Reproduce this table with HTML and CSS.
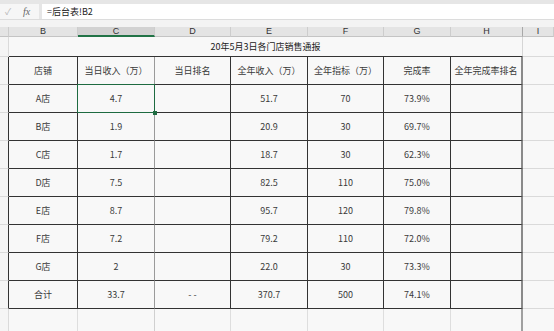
FILE: index.html
```html
<!DOCTYPE html>
<html lang="zh">
<head>
<meta charset="utf-8">
<link rel="stylesheet" href="styles.css">
</head>
<body>
<div class="fbar">
  <div class="fbar-left"><span class="check">✓</span><span class="fx">fx</span></div>
  <div class="fbar-input">=后台表!B2</div>
</div>
<div class="band"></div>
<div class="sheet">
  <div class="ch"></div>
  <div class="ch">B</div>
  <div class="ch ch-sel">C</div>
  <div class="ch">D</div>
  <div class="ch">E</div>
  <div class="ch">F</div>
  <div class="ch">G</div>
  <div class="ch ch-h">H</div>
  <div class="ch">I</div>

  <div class="rh"></div>
  <div class="title">20年5月3日各门店销售通报</div>
  <div class="gc"></div>

  <div class="rh tb"></div>
  <div class="c">店铺</div><div class="c">当日收入（万）</div><div class="c cd">当日排名</div><div class="c">全年收入（万）</div><div class="c">全年指标（万）</div><div class="c">完成率</div><div class="c last">全年完成率排名</div>
  <div class="gc"></div>

  <div class="rh tb"></div>
  <div class="c">A店</div><div class="c sel">4.7</div><div class="c cd"></div><div class="c">51.7</div><div class="c">70</div><div class="c">73.9%</div><div class="c last"></div>
  <div class="gc"></div>

  <div class="rh tb"></div>
  <div class="c">B店</div><div class="c">1.9</div><div class="c cd"></div><div class="c">20.9</div><div class="c">30</div><div class="c">69.7%</div><div class="c last"></div>
  <div class="gc"></div>

  <div class="rh tb"></div>
  <div class="c">C店</div><div class="c">1.7</div><div class="c cd"></div><div class="c">18.7</div><div class="c">30</div><div class="c">62.3%</div><div class="c last"></div>
  <div class="gc"></div>

  <div class="rh tb"></div>
  <div class="c">D店</div><div class="c">7.5</div><div class="c cd"></div><div class="c">82.5</div><div class="c">110</div><div class="c">75.0%</div><div class="c last"></div>
  <div class="gc"></div>

  <div class="rh tb"></div>
  <div class="c">E店</div><div class="c">8.7</div><div class="c cd"></div><div class="c">95.7</div><div class="c">120</div><div class="c">79.8%</div><div class="c last"></div>
  <div class="gc"></div>

  <div class="rh tb"></div>
  <div class="c">F店</div><div class="c">7.2</div><div class="c cd"></div><div class="c">79.2</div><div class="c">110</div><div class="c">72.0%</div><div class="c last"></div>
  <div class="gc"></div>

  <div class="rh tb"></div>
  <div class="c">G店</div><div class="c">2</div><div class="c cd"></div><div class="c">22.0</div><div class="c">30</div><div class="c">73.3%</div><div class="c last"></div>
  <div class="gc"></div>

  <div class="rh tb"></div>
  <div class="c">合计</div><div class="c">33.7</div><div class="c cd">- -</div><div class="c">370.7</div><div class="c">500</div><div class="c">74.1%</div><div class="c last"></div>
  <div class="gc"></div>

  <div class="rh"></div>
  <div class="e"></div><div class="e"></div><div class="e ed"></div><div class="e"></div><div class="e"></div><div class="e"></div><div class="e elast"></div>
  <div class="gc"></div>
</div>
</body>
</html>
```
FILE: styles.css
```css
html, body {
  margin: 0;
  padding: 0;
}
body {
  width: 554px;
  height: 331px;
  overflow: hidden;
  background: #f8f8f8;
  font-family: "Noto Sans CJK SC", "Liberation Sans", sans-serif;
  font-size: 9px;
  color: #3a3a3a;
}
.fbar {
  display: flex;
  height: 19px;
  padding-top: 4px;
  box-sizing: border-box;
  background: #e6e6e6;
}
.fbar-left {
  width: 39px;
  height: 15px;
  background: #f6f6f6;
  display: flex;
  align-items: center;
  margin-right: 3px;
}
.check {
  color: #b8b8b8;
  font-size: 9px;
  margin-left: 5px;
  width: 18px;
}
.fx {
  font-family: "Liberation Serif", serif;
  font-style: italic;
  font-size: 10px;
  color: #666;
}
.fbar-input {
  flex: 1;
  height: 15px;
  background: #ffffff;
  line-height: 15px;
  padding-left: 5px;
  font-size: 9px;
  color: #222;
}
.band {
  height: 8px;
  background: #f3f3f3;
  border-top: 1px solid #dcdcdc;
  box-sizing: border-box;
}
.sheet {
  display: grid;
  grid-template-columns: 9px 69px 77px 76px 77px 76px 67px 72px 31px;
  grid-template-rows: 10px 20px repeat(9, 28px) 24px;
}
.ch {
  background: #e4e4e4;
  border-right: 1px solid #cdcdcd;
  border-bottom: 1px solid #c4c4c4;
  box-sizing: border-box;
  text-align: center;
  line-height: 9px;
  font-family: "Liberation Sans", sans-serif;
  font-size: 9px;
  color: #333;
}
.ch-sel {
  background: #d2d2d2;
  border-bottom: 2px solid #217346;
}
.ch-h {
  border-right: 1px solid #a8a8a8;
}
.rh {
  background: #f5f5f5;
  border-right: 1px solid #dadada;
  border-bottom: 1px solid #dadada;
  box-sizing: border-box;
}
.rh.tb {
  border-right: 1px solid #333;
}
.title {
  grid-column: 2 / 9;
  border-bottom: 1px solid #333;
  border-right: 1px solid #d6d6d6;
  box-sizing: border-box;
  display: flex;
  align-items: center;
  justify-content: center;
  font-size: 9px;
  color: #222;
}
.gc {
  border-bottom: 1px solid #dadada;
  box-sizing: border-box;
}
.c {
  border-right: 1px solid #333;
  border-bottom: 1px solid #333;
  box-sizing: border-box;
  display: flex;
  align-items: center;
  justify-content: center;
  position: relative;
}
.c.cd {
  border-left: 1px solid #9a9a9a;
  margin-left: -1px;
}
.c.last {
  border-right: 2px solid #8a8a8a;
}
.c.sel {
  z-index: 2;
}
.c.sel::after {
  content: "";
  position: absolute;
  left: -1px;
  top: -1px;
  right: -1px;
  bottom: -1px;
  border: 1.5px solid #1e6b41;
}
.c.sel::before {
  content: "";
  position: absolute;
  right: -3px;
  bottom: -3px;
  width: 4px;
  height: 4px;
  background: #1e6b41;
  z-index: 3;
}
.e {
  border-right: 1px solid #dedede;
  box-sizing: border-box;
}
.e.ed {
  border-left: 1px solid #d0d0d0;
  margin-left: -1px;
}
.e.elast {
  border-right: 2px solid #a0a0a0;
}
```
